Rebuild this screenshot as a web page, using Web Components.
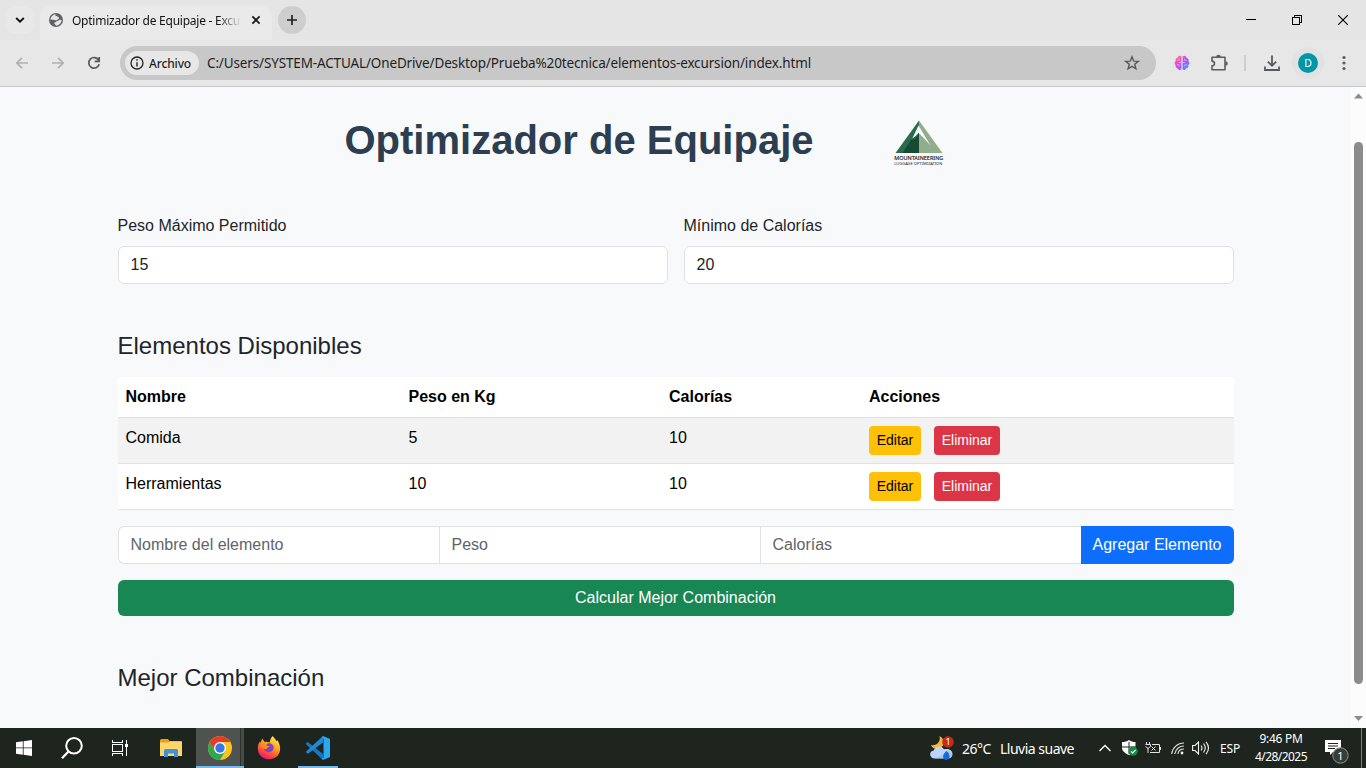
<!DOCTYPE html>
<html lang="es">
<head>
<meta charset="utf-8">
<title>Optimizador de Equipaje - Excursión</title>
<style>
html,body{margin:0;height:100%;overflow:hidden}
body{font-family:"Liberation Sans",Arial,sans-serif;background:#f8f9fb}
</style>
</head>
<body>
<desktop-screen></desktop-screen>
<script>
const define=(name,html,after)=>{
  const t=document.createElement('template');
  t.innerHTML=html;
  customElements.define(name,class extends HTMLElement{
    constructor(){super();this.attachShadow({mode:'open'}).append(t.content.cloneNode(true));}
    connectedCallback(){after&&after(this,this.shadowRoot);}
  });
};

// Spreads its text over an exact width by adjusting the tracking.
define('fit-text','<style>:host{display:block;white-space:nowrap;flex:none}span{display:inline-block}</style><span><slot></slot></span>',(el,r)=>{
  const w=+el.getAttribute('w'),n=el.textContent.length;
  el.style.width=w+'px';
  const s=r.querySelector('span');
  s.style.letterSpacing=((w-s.getBoundingClientRect().width)/n)+'px';
});

define('tab-strip',`<style>
:host{display:flex;height:40px;background:#e5e5e5;font:12px "Noto Sans","Open Sans",sans-serif;color:#111;box-sizing:border-box;align-items:center}
.chev{width:28px;height:28px;margin-left:6px;border-radius:10px;background:#e8e8e8;display:grid;place-items:center}
.tab{align-self:flex-end;height:34px;width:232px;margin-left:6px;border-radius:10px 10px 0 0;background:#eaeaea;display:flex;align-items:center;box-sizing:border-box;padding:0 9px 6px 9px}
.tab .globe{margin-right:9px;flex:none}
.title{width:168px;-webkit-mask:linear-gradient(90deg,#000 145px,transparent 170px);mask:linear-gradient(90deg,#000 145px,transparent 170px);line-height:18px;margin-top:1px}
.x{margin-left:10px;flex:none}
.plus{width:28px;height:28px;border-radius:50%;background:#cecece;display:grid;place-items:center;margin-left:6px}
.win{margin-left:auto;display:flex}
.win span{width:46px;height:40px;display:grid;place-items:center}
</style>
<div class="chev"><svg width="10" height="8" viewBox="0 0 10 8"><path d="M1.2 2 5 5.6 8.8 2" fill="none" stroke="#111" stroke-width="1.9"/></svg></div>
<div class="tab"><svg class="globe" width="14" height="14" viewBox="0 0 14 14"><circle cx="7" cy="7" r="7" fill="#5f6368"/><path d="M6.500 1.200C6 2.700 7 3.200 8 3.100 8.300 4.400 10.200 3.800 10 5.200 9.800 6.300 8.600 6 8.200 6.900 7.600 7.700 6 7.300 4.500 6.800L1.300 6.500C1.700 3.700 4 1.400 6.500 1.200M7.500 8.200C9 8.300 9.600 7.600 10.300 6.800L12.700 7C12.500 10 10.400 12.300 7.500 12.700 6.800 12.500 6.800 11.700 5.800 11.200 5 10.600 5.200 9.500 6.200 9.300 7 9.200 7 8.600 7.500 8.200" fill="#e6e6e6"/></svg>
<div class="title"><fit-text w="168">Optimizador de Equipaje - Excu</fit-text></div>
<svg class="x" width="12" height="12" viewBox="0 0 12 12"><path d="m2.400 2.400 7.200 7.200m0-7.200-7.200 7.200" stroke="#111" stroke-width="1.600"/></svg></div>
<div class="plus"><svg width="12" height="12" viewBox="0 0 12 12"><path d="M6 1v10M1 6h10" stroke="#222" stroke-width="1.700"/></svg></div>
<div class="win">
<span><svg width="10" height="10" shape-rendering="crispEdges"><path d="M0 4.500h10" stroke="#000"/></svg></span>
<span><svg width="10" height="10" shape-rendering="crispEdges"><path d="M.5 2.500h7v7h-7zM2.500 2.500v-2h7v7h-2" fill="none" stroke="#000"/></svg></span>
<span><svg width="10" height="10"><path d="m0 0 10 10M10 0 0 10" stroke="#000" stroke-width="1.100"/></svg></span>
</div>`);

define('tool-bar',`<style>
:host{display:flex;height:47px;box-sizing:border-box;background:#e7e7e7;border-bottom:1px solid #c7c8ca;align-items:center;font:13.5px "Noto Sans","Open Sans",sans-serif;color:#1f1f1f}
svg{display:block;flex:none}
.nav{display:flex;gap:20px;margin-left:14px;width:106px;box-sizing:border-box}
.omni{width:1036px;height:34px;border-radius:17px;background:#c8c8c8;display:flex;align-items:center;box-sizing:border-box;padding:0 16px 0 5px}
.chip{height:24px;width:74px;box-sizing:border-box;border-radius:12px;background:#e7e7e7;display:flex;align-items:center;padding-left:5px;gap:5px;margin-right:8px;font-size:12px;font-weight:500}
.star{margin-left:auto}
.right{display:flex;align-items:center;margin-left:18px}
.sep{width:2px;height:16px;background:#cdced0;margin:0 18px 0 16px}
.av{width:32px;height:32px;border-radius:50%;background:#e2e2e2;display:grid;place-items:center;margin:0 18px 0 12px}
.av b{width:20px;height:20px;border-radius:50%;background:#0097a7;color:#fff;font:10.5px/20px "Noto Sans",sans-serif;text-align:center}
</style>
<div class="nav">
<svg width="16" height="16" viewBox="0 0 16 16"><path d="M14 8H3M8 2.800 2.800 8 8 13.200" fill="none" stroke="#b0b0b0" stroke-width="1.700"/></svg>
<svg width="16" height="16" viewBox="0 0 16 16"><path d="M2 8h11M8 2.800 13.200 8 8 13.200" fill="none" stroke="#b0b0b0" stroke-width="1.700"/></svg>
<svg width="16" height="16" viewBox="0 0 16 16"><path d="M12.600 5A5.300 5.300 0 1 0 13.200 9.300M13.200 2v4.400H8.700" fill="none" stroke="#55585c" stroke-width="1.700"/></svg>
</div>
<div class="omni"><div class="chip"><svg width="14" height="14" viewBox="0 0 14 14"><circle cx="7" cy="7" r="6" fill="none" stroke="#222" stroke-width="1.300"/><path d="M7 6.200v4.200M7 3.300v1.500" stroke="#222" stroke-width="1.400"/></svg><fit-text w="42">Archivo</fit-text></div>
<fit-text w="604">C:/Users/SYSTEM-ACTUAL/OneDrive/Desktop/Prueba%20tecnica/elementos-excursion/index.html</fit-text>
<svg class="star" width="16" height="16" viewBox="0 0 16 16"><path d="m8 1.800 1.700 4.300 4.600.3-3.600 2.900 1.200 4.500L8 11.300l-3.900 2.500 1.200-4.500-3.600-2.900 4.600-.3z" fill="none" stroke="#55585c" stroke-width="1.400"/></svg></div>
<div class="right">
<svg width="16" height="16" viewBox="0 0 16 16"><defs><linearGradient id="g" x1="0" y1="0" x2="1" y2="1"><stop offset="0" stop-color="#ff9a5c"/><stop offset=".3" stop-color="#f14fc6"/><stop offset=".6" stop-color="#9a5cf5"/><stop offset="1" stop-color="#22b5ff"/></linearGradient></defs><path d="M7.400 1.600C6.200.2 3.800.8 3.600 2.800 1.700 3 1 4.800 1.700 6 .1 7 .2 9.300 1.700 10c-.6 1.700.5 3.100 2 3.200.4 1.900 2.800 2.400 3.700 1zM8.600 1.600C9.800.2 12.200.8 12.400 2.800 14.300 3 15 4.800 14.300 6c1.600 1 1.500 3.300 0 4 .6 1.700-.5 3.100-2 3.200-.4 1.900-2.800 2.400-3.700 1z" fill="url(#g)"/><path d="M3.400 5.300h2v-1.500M3 9.800h2.200v1.700M12.600 5.300h-2V3.800M13 9.800h-2.200v1.700M7 7.500H4.800M9 7.500h2.200" fill="none" stroke="#f3d6ff" stroke-width=".6"/></svg>
<svg style="margin-left:20px" width="18" height="18" viewBox="0 0 18 18"><path d="M2 3.200h13v12.600H2v-3.900c3.300-.2 3.300-4.600 0-4.800z" fill="none" stroke="#5a5d61" stroke-width="1.600" stroke-linejoin="round"/><path d="M6.200 3a2.300 2.300 0 0 1 4.600 0zM15.500 7.200a2.300 2.300 0 0 1 0 4.600z" fill="#5a5d61"/></svg>
<div class="sep"></div>
<svg width="16" height="16" viewBox="0 0 16 16"><path d="M8 .5v10M3.800 6.700 8 10.800l4.200-4.100M1 11.500V15h14v-3.500" fill="none" stroke="#55585c" stroke-width="1.800"/></svg>
<div class="av"><b>D</b></div>
<svg width="4" height="16" viewBox="0 0 4 16"><g fill="#5a5d61"><circle cx="2" cy="2.500" r="1.600"/><circle cx="2" cy="8" r="1.600"/><circle cx="2" cy="13.500" r="1.600"/></g></svg>
</div>`);

define('mountain-logo',`<style>:host{display:block;width:50px;height:50px}svg{display:block;overflow:visible}text{font-family:"Noto Sans","Open Sans",sans-serif}</style>
<svg width="50" height="50" viewBox="0 0 50 50"><path d="M25 2.500 1.500 35H25z" fill="#2a6b4c"/><path d="M25 2.500V35h23.500z" fill="#92ad8b"/><path d="m17 22-8.500 13H25V15.500l-3.500 5z" fill="#164a33"/><path d="M24.500 7.500 18.300 20.500l3.700-2.800 2.500-3 4.500 4.500 7.500 8.300z" fill="#f8f9fb"/>
<text x=".3" y="42.300" font-size="5.300" fill="#222" stroke="#222" stroke-width=".15" textLength="49" lengthAdjust="spacingAndGlyphs">MOUNTAINEERING</text><text x=".3" y="47" font-size="4" fill="#222" textLength="48" lengthAdjust="spacingAndGlyphs">LUGGAGE OPTIMIZATION</text></svg>`);

define('number-field',`<style>:host{display:block;flex:1}label{display:block;line-height:24px;margin-bottom:8px}
.c{height:38px;box-sizing:border-box;border:1px solid #dee2e6;border-radius:6px;background:#fff;padding:6px 12px;line-height:24px}</style>
<label><slot name="label"></slot></label><div class="c"><slot></slot></div>`);

define('small-button',`<style>:host{display:block;height:29px;box-sizing:border-box;border-radius:4px;padding:4px 0;width:52px;text-align:center;font-size:14px;line-height:21px;background:#ffc107;color:#000}
:host([danger]){background:#dc3545;color:#fff;width:66px}</style><slot></slot>`);

define('item-row',`<style>:host{display:grid;grid-template-columns:283px 260.500px 200px 1fr;box-sizing:border-box;height:46px;border-bottom:1px solid #dee2e6;background:#fff;color:#000;line-height:24px}
:host([odd]){background:#f2f2f2}:host([head]){height:41px;font-weight:700}
div{padding:8px}.a{display:flex;gap:13px}:host([head]) .b{display:none}</style>
<div><slot name="n"></slot></div><div><slot name="p"></slot></div><div><slot name="c"></slot></div><div class="a"><slot name="a"></slot><small-button class="b">Editar</small-button><small-button class="b" danger>Eliminar</small-button></div>`);

define('add-form',`<style>:host{display:flex;height:38px;margin-top:16px;line-height:24px}
div{flex:1;box-sizing:border-box;border:1px solid #dee2e6;border-right:0;background:#fff;color:#5f6469;padding:6px 12px;height:38px}
div:first-of-type{border-radius:6px 0 0 6px}
b{font-weight:400;background:#0d6efd;color:#fff;width:153px;box-sizing:border-box;padding:7px 0;text-align:center;border-radius:0 6px 6px 0}</style>
<div>Nombre del elemento</div><div>Peso</div><div>Calorías</div><b>Agregar Elemento</b>`);

define('page-scrollbar',`<style>:host{display:flex;flex-direction:column;width:15px;background:#fcfcfc;align-items:center}
i{width:9px;height:542px;border-radius:4.500px;background:#8b8b8b;margin:42px 0 auto}
svg{margin-top:5px;display:block}svg:last-child{margin:0 0 5px}</style>
<svg width="9" height="8"><path d="M0 6.500h9L4.500 1.500z" fill="#8b8b8b"/></svg><i></i><svg width="9" height="8"><path d="M0 1h9L4.500 6z" fill="#8b8b8b"/></svg>`);

define('luggage-app',`<style>
:host{display:block;flex:1;color:#212529;font-size:16px}
main{width:1116px;margin:0 auto}
header{display:flex;align-items:center;height:127px;box-sizing:border-box;padding:0 0 21px 227px;gap:80px}
h1{margin:0;font-size:40px;line-height:48px;color:#2c3e50}
h2{margin:0;font-weight:400;font-size:24px;line-height:29px}
.f{display:flex;gap:16px;margin-bottom:47px}
.t{margin-top:17px}
.calc{margin-top:16px;height:36px;border-radius:6px;background:#198754;color:#fff;text-align:center;line-height:35px}
.m{margin-top:47px}
mountain-logo{margin-top:6px}
</style><main>
<header><h1><fit-text w="469">Optimizador de Equipaje</fit-text></h1><mountain-logo></mountain-logo></header>
<div class="f"><number-field><span slot="label">Peso Máximo Permitido</span>15</number-field><number-field><span slot="label">Mínimo de Calorías</span>20</number-field></div>
<h2>Elementos Disponibles</h2>
<div class="t"><item-row head><span slot="n">Nombre</span><span slot="p">Peso en Kg</span><span slot="c">Calorías</span><span slot="a">Acciones</span></item-row>
<item-row odd><span slot="n">Comida</span><span slot="p">5</span><span slot="c">10</span></item-row>
<item-row><span slot="n">Herramientas</span><span slot="p">10</span><span slot="c">10</span></item-row></div>
<add-form></add-form><div class="calc">Calcular Mejor Combinación</div>
<h2 class="m">Mejor Combinación</h2></main>`);

define('task-bar',`<style>
:host{display:flex;height:40px;background:#1e241e;color:#fff;font:14px "Noto Sans","Open Sans",sans-serif;align-items:center}
svg{display:block;flex:none}
.b{width:48px;height:40px;display:grid;place-items:center;box-sizing:border-box;flex:none}
.w{width:49px}.files{margin:0 1px 0 2px}
.chrome{background:linear-gradient(90deg,#4f534f 44px,#2b302b 44px,#2b302b 45px,#474b47 45px);border-bottom:2px solid #76b9ed;width:48px;padding-top:2px}
.code{width:40px;border-bottom:2px solid #76b9ed;padding-top:2px;margin-left:5px}
.r{display:flex;align-items:center;margin-left:auto;width:437px;height:40px}
.clock{font-size:12px;line-height:18px;display:flex;flex-direction:column;align-items:center;width:54px;margin-left:14px}
.end{width:5px;height:40px;margin-left:auto;border-left:1px solid #7a7d7a;box-sizing:border-box}
</style>
<div class="b"><svg width="16" height="16" viewBox="0 0 16 16" fill="#fff"><path d="M0 2.200 6.800 1.300v6.300H0zM7.600 1.200 16 0v7.600H7.600zM0 8.300h6.800v6.400L0 13.800zM7.600 8.300H16V16l-8.400-1.200z"/></svg></div>
<div class="b"><svg width="22" height="22" viewBox="0 0 22 22"><circle cx="13" cy="8.800" r="7.800" fill="none" stroke="#fff" stroke-width="2"/><path d="M7.500 14.500 1 21.200" stroke="#fff" stroke-width="2.300"/></svg></div>
<div class="b"><svg width="16" height="16" viewBox="0 0 16 16" fill="none" stroke="#fff" stroke-width="1" shape-rendering="crispEdges"><path d="M.5 0v2.500h10V0M.5 16v-2.500h10V16M.5 4.500h10v7H.5zM14.500 0v16"/><path d="M13 4h3v3h-3z" fill="#fff" stroke="none"/></svg></div>
<div class="b w files"><svg width="22" height="18" viewBox="0 0 22 18"><path d="M0 1.500Q0 0 1.200 0H8l1.500 2H20.500q1.500 0 1.500 1.500V17H0z" fill="#e3a21a"/><path d="M0 3.500h8l2-1h12V17H0z" fill="#ffd667"/><path d="M4 18v-6.500Q4 10 5.500 10h11q1.500 0 1.500 1.500V18h-4v-3.500H8V18z" fill="#3f94d8"/></svg></div>
<div class="b chrome"><svg width="24" height="24" viewBox="0 0 24 24"><circle cx="12" cy="12" r="12" fill="#fcc31e"/><path d="M6.800 15 1.610 6A12 12 0 0 1 22.390 6H12z" fill="#e33b2e"/><path d="M1.610 6 6.800 15 12 18l5.200-3L12 24A12 12 0 0 1 1.610 6" fill="#2da94f"/><circle cx="12" cy="12" r="6" fill="#fff"/><circle cx="12" cy="12" r="4.700" fill="#3379e4"/></svg></div>
<div class="b w"><svg width="24" height="24" viewBox="0 0 24 24"><defs><linearGradient id="f" x1=".8" y1="0" x2=".3" y2="1"><stop offset="0" stop-color="#fff44f"/><stop offset=".45" stop-color="#ff9a1f"/><stop offset=".8" stop-color="#ff3b47"/><stop offset="1" stop-color="#e31587"/></linearGradient></defs><path d="M15.500 0c2 2 3.300 3.700 3.800 5.300.6-.4.7-1 .7-1.500 5.800 7 3.800 19.200-8 19.500C5 23.500.5 18 .8 12 .9 9 2 6.500 3.200 5.300L3.500 7 5.300 2.500 7.600 6c1.700-.4 3.500-.2 4.900.6C13 4 14 2 15.500 0" fill="url(#f)"/><path d="M11.500 7.300c3.500-.3 6 2.500 5 5.700-.8 2.700-4.200 4-7 2.700-2.300-1-3-3-2.300-4.800 1.200.3 2-.1 2.800-.9-1.200-.7-.5-2.100 1.500-2.700" fill="#7c45c9"/><path d="M4 8.800c2.200-1.300 4.700-.5 5.500.5.800.8 2.700.6 3 1-.6 1.400-2.600 1.300-3 2.700-3 .2-5.500-.8-5.500-4.200" fill="#ff8a16"/></svg></div>
<div class="b code"><svg width="24" height="24" viewBox="0 0 24 24"><path d="m1.800 6 15.200 12v6L.2 8.500a.8.8 0 0 1 0-1.200z" fill="#0f7bc4"/><path d="M.2 15.500 17 0v6.500L1.900 17.800.2 16.500z" fill="#2389d3"/><path d="M17 0 24 3v18l-7 3-1-1.500 1.500-1V3L16 1z" fill="#2ba8ef"/></svg></div>
<div class="r">
<svg style="margin-left:1px" width="26" height="24" viewBox="0 0 26 24"><path d="M9.500 0c1.500 6-3 10-8.500 9 1.500 4.500 9 6 12 .5C15 5 12.500 1.500 9.500 0" fill="#f6b23c"/><path d="M5 22.500c-6 0-6.500-7.500-1.200-8 1.200-5 8.200-5.500 10.200-1.200 4.500-1.200 8.300 1 8.500 4.500.2 3-2 4.700-5 4.700z" fill="#b9d5f8"/><path d="M4 21c3 1.500 9-.5 12-6 4 0 6 1 6 4-.5 3-3 3.500-5 3.500H5z" fill="#96bdf0" opacity=".6"/><path d="M16.500 15c4 3.500 4 8.500 0 9-4.500-.3-4.500-5.500 0-9" fill="#1769dc"/><circle cx="18" cy="6" r="5.800" fill="#c42b1c"/><text x="18" y="9.300" text-anchor="middle" font-size="9" fill="#fff" font-family="Noto Sans">1</text></svg>
<fit-text style="margin-left:6px" w="29">26°C</fit-text><fit-text style="margin-left:9px" w="74">Lluvia suave</fit-text>
<svg style="margin-left:25px" width="12" height="8" viewBox="0 0 12 8"><path d="M.5 7 6 1.500 11.500 7" fill="none" stroke="#fff" stroke-width="1.300"/></svg>
<svg style="margin-left:11px" width="16" height="16" viewBox="0 0 16 16"><path d="M7 0c2 1.500 4 2 6.500 2v6c0 3-3 5.500-6.500 7C3.500 13.500 0 11 0 8V2c2.500 0 5-.5 7-2" fill="#fff"/><path d="M7 2v12M0 7h14" stroke="#1e241e" stroke-width="1"/><circle cx="11.200" cy="11.200" r="4.600" fill="#128a43"/><path d="m9 11.300 1.700 1.600 2.900-3.100" fill="none" stroke="#fff" stroke-width="1.100"/></svg>
<svg style="margin-left:7px" width="16" height="12" viewBox="0 0 16 12" fill="none" stroke="#e3e3e3"><path d="M1.500 0v3M4.500 0v3M.5 2.500h5v2L3 6.500.5 4.500M3 6v5M7 2.500h7.500v8H5M15.500 5v3M6.500 4.500l4 4m0-4-4 4"/></svg>
<svg style="margin-left:10px" width="14" height="14" viewBox="0 0 14 14" fill="none" stroke="#d8d8d8" stroke-width="1.200"><path d="M.7 13A12.300 12.300 0 0 1 13 2M3.800 13A9.200 9.200 0 0 1 13 5M6.800 13A6.200 6.200 0 0 1 13 8"/><circle cx="11" cy="12" r="1.400" fill="#fff" stroke="none"/></svg>
<svg style="margin-left:7px" width="18" height="14" viewBox="0 0 18 14" fill="none" stroke="#f2f2f2" stroke-width="1.100"><path d="M.6 4.500h2.500L6.500 1v12L3.100 9.500H.6zM9 4.500q2 2.500 0 5M11.500 2.500q3.500 4.500 0 9M14 .8q5 6.200 0 12.400"/></svg>
<fit-text style="margin-left:10px;font-size:12px" w="20">ESP</fit-text>
<div class="clock"><fit-text w="43">9:46 PM</fit-text><fit-text w="52">4/28/2025</fit-text></div>
<svg style="margin-left:16px;margin-top:5px" width="26" height="26" viewBox="0 0 26 26"><path d="M1 2h16v12H9l-3 3v-3H1z" fill="#fff"/><path d="M4 5.500h10M4 8h10M4 10.500h7" stroke="#1e241e"/><circle cx="16.500" cy="17.500" r="7.700" fill="#383c38" stroke="#929492"/><text x="16.500" y="21.500" text-anchor="middle" font-size="11" fill="#fff" font-family="Noto Sans">1</text></svg>
<div class="end"></div></div>`);

define('desktop-screen',`<style>:host{display:flex;flex-direction:column;width:1366px;height:768px}
.view{display:flex;height:641px;background:#f8f9fb;overflow:hidden}</style>
<tab-strip></tab-strip><tool-bar></tool-bar><div class="view"><luggage-app></luggage-app><page-scrollbar></page-scrollbar></div><task-bar></task-bar>`);
</script>
</body>
</html>
